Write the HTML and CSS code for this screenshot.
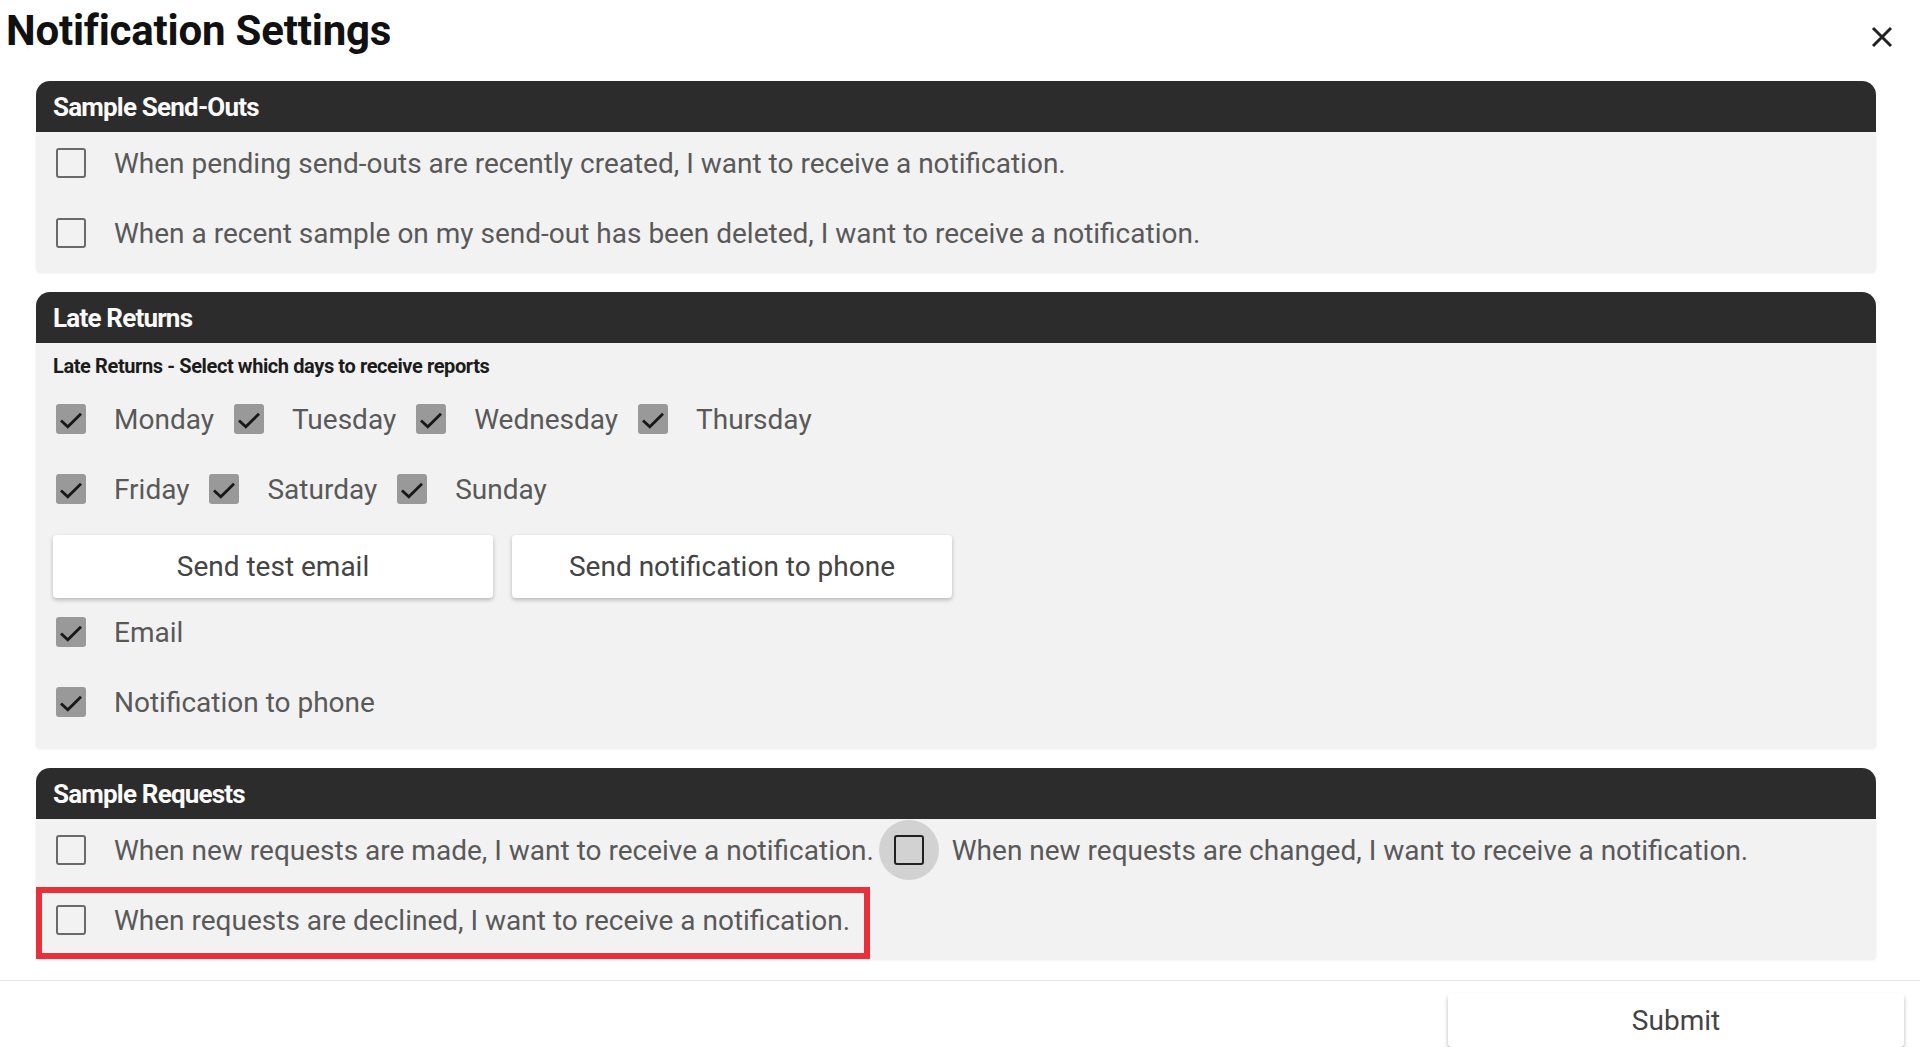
FILE: index.html
```html
<!DOCTYPE html>
<html lang="en">
<head>
    <meta charset="UTF-8">
    <meta name="viewport" content="width=device-width, initial-scale=1.0">
    <title>Notification Settings</title>
    <link rel="stylesheet" href="styles.css">
</head>
<body>
    <div class="dialog">
        <div class="dialog-head">
            <h1 class="title">Notification Settings</h1>
            <button class="close" aria-label="Close">
                <svg width="24" height="24" viewBox="0 0 24 24"><path d="M3 3L21 21M21 3L3 21" stroke="#222" stroke-width="3" fill="none"/></svg>
            </button>
        </div>

        <div class="content">
            <section class="panel">
                <div class="panel-head">Sample Send-Outs</div>
                <div class="panel-body send-outs">
                    <div class="row">
                        <label class="choice"><span class="box"></span>When pending send-outs are recently created, I want to receive a notification.</label>
                    </div>
                    <div class="row">
                        <label class="choice"><span class="box"></span>When a recent sample on my send-out has been deleted, I want to receive a notification.</label>
                    </div>
                </div>
            </section>

            <section class="panel">
                <div class="panel-head">Late Returns</div>
                <div class="panel-body late-returns">
                    <div class="subtitle">Late Returns - Select which days to receive reports</div>
                    <div class="row">
                        <label class="choice"><span class="box checked"><svg viewBox="0 0 30 30"><path d="M5 16.5l6.8 6.3L25 9.8"/></svg></span>Monday</label>
                        <label class="choice"><span class="box checked"><svg viewBox="0 0 30 30"><path d="M5 16.5l6.8 6.3L25 9.8"/></svg></span>Tuesday</label>
                        <label class="choice"><span class="box checked"><svg viewBox="0 0 30 30"><path d="M5 16.5l6.8 6.3L25 9.8"/></svg></span>Wednesday</label>
                        <label class="choice"><span class="box checked"><svg viewBox="0 0 30 30"><path d="M5 16.5l6.8 6.3L25 9.8"/></svg></span>Thursday</label>
                    </div>
                    <div class="row">
                        <label class="choice"><span class="box checked"><svg viewBox="0 0 30 30"><path d="M5 16.5l6.8 6.3L25 9.8"/></svg></span>Friday</label>
                        <label class="choice"><span class="box checked"><svg viewBox="0 0 30 30"><path d="M5 16.5l6.8 6.3L25 9.8"/></svg></span>Saturday</label>
                        <label class="choice"><span class="box checked"><svg viewBox="0 0 30 30"><path d="M5 16.5l6.8 6.3L25 9.8"/></svg></span>Sunday</label>
                    </div>
                    <div class="actions">
                        <button class="btn">Send test email</button>
                        <button class="btn">Send notification to phone</button>
                    </div>
                    <div class="row">
                        <label class="choice"><span class="box checked"><svg viewBox="0 0 30 30"><path d="M5 16.5l6.8 6.3L25 9.8"/></svg></span>Email</label>
                    </div>
                    <div class="row">
                        <label class="choice"><span class="box checked"><svg viewBox="0 0 30 30"><path d="M5 16.5l6.8 6.3L25 9.8"/></svg></span>Notification to phone</label>
                    </div>
                </div>
            </section>

            <section class="panel">
                <div class="panel-head">Sample Requests</div>
                <div class="panel-body requests">
                    <div class="row">
                        <label class="choice"><span class="box"></span>When new requests are made, I want to receive a notification.</label>
                        <label class="choice"><span class="box focus"></span>When new requests are changed, I want to receive a notification.</label>
                    </div>
                    <div class="row marked">
                        <label class="choice"><span class="box"></span>When requests are declined, I want to receive a notification.</label>
                    </div>
                </div>
            </section>
        </div>

        <div class="dialog-foot">
            <button class="btn submit">Submit</button>
        </div>
    </div>
</body>
</html>
```

FILE: styles.css
```css
body {
    margin: 0;
    background: #fff;
    font-family: Roboto, "Liberation Sans", sans-serif;
    color: #595959;
}

.dialog-head {
    display: flex;
    justify-content: space-between;
    align-items: center;
    height: 62px;
    padding: 0 26px 0 6px;
}

.title {
    margin: 0;
    font-size: 42px;
    font-weight: 700;
    line-height: 1;
    color: #111;
    letter-spacing: -0.2px;
}

.close {
    align-self: flex-end;
    margin-bottom: 13px;
    width: 24px;
    height: 24px;
    padding: 0;
    border: none;
    background: none;
    cursor: pointer;
}

.close svg {
    display: block;
}

.content {
    display: flex;
    flex-direction: column;
    gap: 20px;
    padding: 19px 44px 0 36px;
}

.panel-head {
    display: flex;
    align-items: center;
    height: 51px;
    padding-left: 17px;
    background: #2c2c2c;
    border-radius: 14px 14px 0 0;
    color: #fafafa;
    font-size: 26px;
    font-weight: 700;
    letter-spacing: -0.8px;
}

.panel-body {
    display: flex;
    flex-direction: column;
    background: #f2f2f2;
    border-radius: 0 0 4px 4px;
    box-shadow: 0 1px 3px rgba(0, 0, 0, 0.08);
}

.send-outs {
    padding-bottom: 8px;
}

.late-returns {
    padding-bottom: 15px;
}

.row {
    display: flex;
    align-items: center;
    height: 62px;
    padding-left: 20px;
}

.row + .row {
    margin-top: 8px;
}

.choice {
    display: flex;
    align-items: center;
    gap: 28px;
    margin-right: 20px;
    font-size: 28px;
    white-space: nowrap;
    cursor: pointer;
}

.box {
    position: relative;
    display: flex;
    align-items: center;
    justify-content: center;
    flex-shrink: 0;
    width: 30px;
    height: 30px;
    box-sizing: border-box;
    border: 2.5px solid #6a6a6a;
    border-radius: 3px;
}

.box.checked {
    background: #999;
    border-color: #999;
}

.box svg {
    width: 30px;
    height: 30px;
    flex-shrink: 0;
    fill: none;
    stroke: #181818;
    stroke-width: 2.8;
}

.box.focus {
    border-color: #262626;
}

.box.focus::before {
    content: "";
    position: absolute;
    inset: -17px;
    border-radius: 50%;
    background: rgba(0, 0, 0, 0.13);
}

.subtitle {
    margin: 11px 0 10px 17px;
    font-size: 20px;
    font-weight: 700;
    line-height: 24px;
    color: #1c1c1c;
    letter-spacing: -0.4px;
}

.actions {
    display: flex;
    gap: 19px;
    margin: 15px 0 3px 17px;
}

.btn {
    height: 63px;
    width: 440px;
    border: none;
    border-radius: 4px;
    background: #fff;
    box-shadow: 0 2px 4px rgba(0, 0, 0, 0.25);
    font-family: Roboto, "Liberation Sans", sans-serif;
    font-size: 28px;
    color: #444;
    cursor: pointer;
}

.row.marked {
    align-self: flex-start;
    height: 72px;
    margin-top: 6px;
    padding: 0 0 6px 20px;
    box-sizing: border-box;
    outline: 6px solid #e8303a;
    outline-offset: -6px;
}

.row.marked .choice {
    margin-right: 20px;
}

.dialog-foot {
    display: flex;
    justify-content: flex-end;
    margin-top: 21px;
    padding: 12px 16px 0;
    border-top: 1px solid #e6e6e6;
}

.submit {
    width: 456px;
    height: 54px;
    box-shadow: 0 3px 4px rgba(0, 0, 0, 0.28);
}
```
